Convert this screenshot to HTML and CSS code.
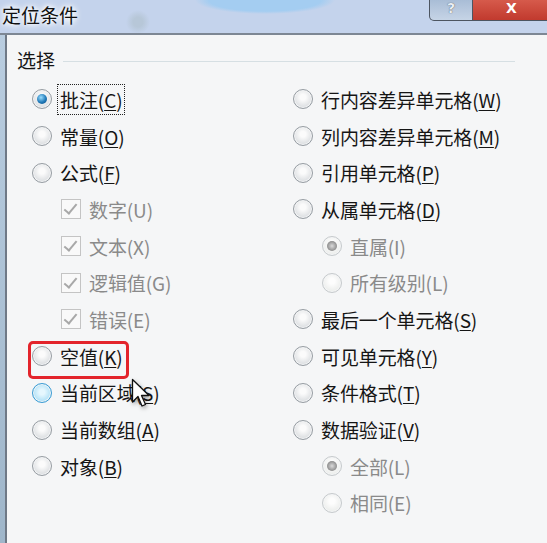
FILE: index.html
```html
<!DOCTYPE html>
<html lang="zh-CN">
<head>
    <meta charset="UTF-8">
    <title>定位条件</title>
    <link rel="stylesheet" href="styles.css">
</head>
<body>
    <!-- title bar -->
    <div class="titlebar">
        <span class="title">定位条件</span>
        <div class="caption-btns">
            <div class="cap-btn help">?</div>
            <div class="cap-btn close">X</div>
        </div>
    </div>

    <div class="window">
        <div class="frame"></div>
        <div class="dialog">
            <div class="group-head">
                <span>选择</span>
                <span class="rule"></span>
            </div>

            <div class="options">
                <!-- left column -->
                <div class="col">
                    <div class="opt"><span class="radio on"></span><span class="label focus">批注(<u>C</u>)</span></div>
                    <div class="opt"><span class="radio"></span><span class="label">常量(<u>O</u>)</span></div>
                    <div class="opt"><span class="radio"></span><span class="label">公式(<u>F</u>)</span></div>
                    <div class="opt sub"><span class="check"></span><span class="label">数字(U)</span></div>
                    <div class="opt sub"><span class="check"></span><span class="label">文本(X)</span></div>
                    <div class="opt sub"><span class="check"></span><span class="label">逻辑值(G)</span></div>
                    <div class="opt sub"><span class="check"></span><span class="label">错误(E)</span></div>
                    <div class="opt"><span class="radio"></span><span class="label">空值(<u>K</u>)</span></div>
                    <div class="opt"><span class="radio hover"></span><span class="label">当前区域(<u>S</u>)</span></div>
                    <div class="opt"><span class="radio"></span><span class="label">当前数组(<u>A</u>)</span></div>
                    <div class="opt"><span class="radio"></span><span class="label">对象(<u>B</u>)</span></div>
                </div>

                <!-- right column -->
                <div class="col">
                    <div class="opt"><span class="radio"></span><span class="label">行内容差异单元格(<u>W</u>)</span></div>
                    <div class="opt"><span class="radio"></span><span class="label">列内容差异单元格(<u>M</u>)</span></div>
                    <div class="opt"><span class="radio"></span><span class="label">引用单元格(<u>P</u>)</span></div>
                    <div class="opt"><span class="radio"></span><span class="label">从属单元格(<u>D</u>)</span></div>
                    <div class="opt sub"><span class="radio on off"></span><span class="label">直属(I)</span></div>
                    <div class="opt sub"><span class="radio off"></span><span class="label">所有级别(L)</span></div>
                    <div class="opt"><span class="radio"></span><span class="label">最后一个单元格(<u>S</u>)</span></div>
                    <div class="opt"><span class="radio"></span><span class="label">可见单元格(<u>Y</u>)</span></div>
                    <div class="opt"><span class="radio"></span><span class="label">条件格式(<u>T</u>)</span></div>
                    <div class="opt"><span class="radio"></span><span class="label">数据验证(<u>V</u>)</span></div>
                    <div class="opt sub"><span class="radio on off"></span><span class="label">全部(L)</span></div>
                    <div class="opt sub"><span class="radio off"></span><span class="label">相同(E)</span></div>
                </div>
            </div>

            <!-- annotation over the dialog -->
            <div class="mark"></div>
            <svg class="cursor" width="22" height="32" viewBox="0 0 22 32">
                <path d="M1.5 1.5 L1.5 24 L7 18.5 L11 28 L14.5 26.5 L10.5 17.5 L18 17.5 Z" fill="#fff" stroke="#111" stroke-width="1.3" stroke-linejoin="round"/>
            </svg>
        </div>
    </div>
</body>
</html>
```

FILE: styles.css
```css
/* General Styles */
body {
    margin: 0;
    width: 547px;
    height: 543px;
    overflow: hidden;
    background: #c4d3ec;
    font-family: "Noto Sans CJK SC", "Noto Sans", sans-serif;
    color: #151515;
}

/* Title bar */
.titlebar {
    height: 33px;
    display: flex;
    justify-content: space-between;
    background:
        radial-gradient(ellipse 70px 14px at 265px 0, #a4cdf1 80%, transparent 100%),
        radial-gradient(circle 12px at 138px 22px, #b7c7d8 40%, transparent 100%),
        #c4d3ec;
    border-bottom: 2px solid #7d8794;
}

.title {
    font-size: 19px;
    line-height: 30px;
    padding-left: 2px;
    color: #111;
    text-shadow: 0 0 4px #fff, 0 0 6px #fff, 0 0 8px #fff;
}

.caption-btns {
    display: flex;
    align-items: flex-start;
    margin-right: -4px;
}

.cap-btn {
    height: 20px;
    border: 1px solid #4d5561;
    border-top: none;
    color: #fff;
    font-family: "DejaVu Sans", sans-serif;
    font-weight: bold;
    font-size: 14px;
    line-height: 16px;
    text-align: center;
}

.help {
    width: 42px;
    border-radius: 0 0 0 5px;
    background: linear-gradient(#a9bdd6, #c6d4e6);
    color: #e8eef6;
    text-shadow: 0 0 1px #333;
}

.close {
    width: 77px;
    border-left: none;
    background: linear-gradient(#d65a4b, #c13a2e);
}

/* Window body */
.window {
    display: flex;
    height: 508px;
}

.frame {
    width: 5px;
    background: linear-gradient(#b9cde0, #9fb6ca);
    border-right: 2px solid #6f7986;
}

.dialog {
    position: relative;
    flex: 1;
    background: #f5f6f7;
}

.group-head {
    display: flex;
    align-items: center;
    gap: 8px;
    padding: 10px 32px 0 10px;
    font-size: 19px;
    line-height: 30px;
}

.group-head .rule {
    flex: 1;
    height: 1px;
    background: #d6dfe3;
    margin-top: 2px;
}

.options {
    display: grid;
    grid-template-columns: 261px 1fr;
    padding: 6px 0 0 25px;
}

.opt {
    height: 36.7px;
    display: flex;
    align-items: center;
    gap: 8px;
    font-size: 19px;
}

.opt.sub {
    padding-left: 29px;
    color: #8a8a8a;
}

.label {
    padding: 1px 2px;
    border: 1px dotted transparent;
    margin-left: -3px;
    letter-spacing: -0.1px;
}

.label.focus {
    border-color: #222;
}

.label u {
    text-underline-offset: 2px;
}

/* Radio buttons */
.radio {
    width: 18px;
    height: 18px;
    flex: none;
    border-radius: 50%;
    border: 1px solid #979da3;
    background: radial-gradient(circle at 50% 40%, #fbfbfb 20%, #d9dcdf 75%, #c4c8cc);
    box-shadow: inset 0 0 0 1px #f4f5f6;
    position: relative;
}

.radio.on::after {
    content: "";
    position: absolute;
    inset: 4px;
    border-radius: 50%;
    background: radial-gradient(circle at 40% 35%, #8fd4f8 5%, #2079b8 55%, #0c4b80);
}

.radio.hover {
    border-color: #3b9cd4;
    background: radial-gradient(circle at 50% 45%, #e6f7fe 20%, #aee0f6 70%, #82c9ec);
}

.radio.off {
    border-color: #c6cacd;
    background: radial-gradient(circle at 50% 40%, #fdfdfd 20%, #eaecea 75%, #dfe3dd);
}

.radio.on.off::after {
    background: radial-gradient(circle, #d0d0d0 10%, #8e8e8e 70%);
}

/* Checkboxes (disabled, checked) */
.check {
    width: 18px;
    height: 18px;
    flex: none;
    border: 1px solid #c4c4c4;
    background: #f9f9f9;
    position: relative;
}

.check::after {
    content: "";
    position: absolute;
    left: 5px;
    top: 1px;
    width: 5px;
    height: 11px;
    border: solid #a8a8a8;
    border-width: 0 2px 2px 0;
    transform: rotate(40deg);
}

/* Red highlight and pointer over the dialog */
.mark {
    position: absolute;
    left: 21px;
    top: 306px;
    width: 95px;
    height: 32px;
    border: 3px solid #e3242b;
    border-radius: 5px;
}

.cursor {
    position: absolute;
    left: 124px;
    top: 343px;
    filter: drop-shadow(1px 2px 2px rgba(0, 0, 0, 0.35));
}
```
